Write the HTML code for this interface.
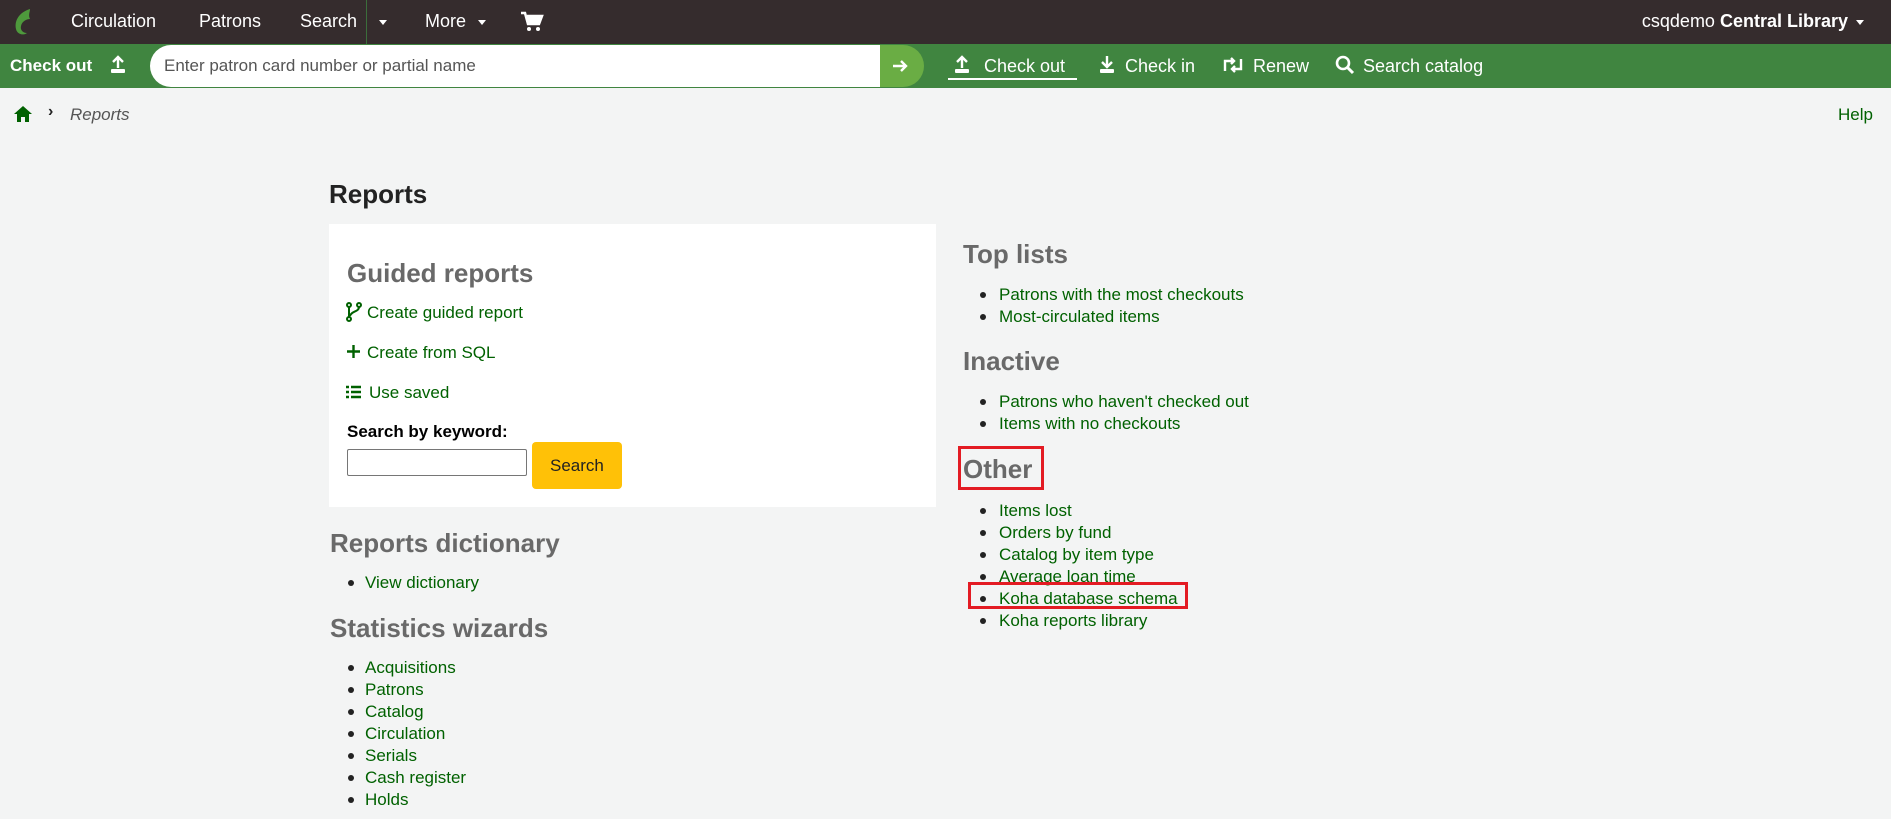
<!DOCTYPE html>
<html><head><meta charset="utf-8"><style>
*{margin:0;padding:0;box-sizing:border-box}
body{width:1891px;height:819px;background:#f3f4f4;font-family:"Liberation Sans",sans-serif;position:relative;overflow:hidden}
.a{position:absolute;white-space:nowrap;line-height:1}
.nav{position:absolute;left:0;top:0;width:1891px;height:44px;background:#352c2d}
.gb{position:absolute;left:0;top:44px;width:1891px;height:44px;background:#408540}
.w{color:#fff;font-size:18px}
.h{color:#696969;font-weight:bold;font-size:26px}
.l{color:#006100;font-size:17px}
.b{position:absolute;width:6px;height:6px;border-radius:50%;background:#222}
</style></head><body>
<div class="nav"></div>
<svg class="a" style="left:12px;top:8px" width="24" height="28" viewBox="0 0 24 28"><path d="M18 1C8 4 2 12 4 21c1 5 7 7 11 4-4 0-7-3-6-7 1-5 6-7 9-7-2-4 0-7 0-10z" fill="#4e9a3c"/></svg>
<div class="a w" style="left:71px;top:12px">Circulation</div>
<div class="a w" style="left:199px;top:12px">Patrons</div>
<div class="a w" style="left:300px;top:12px">Search</div>
<div class="a" style="left:366px;top:0;width:1px;height:44px;background:#3b6e3b"></div>
<div class="a" style="left:379px;top:20px;border:4px solid transparent;border-top:5px solid #fff;border-bottom:0"></div>
<div class="a w" style="left:425px;top:12px">More</div>
<div class="a" style="left:478px;top:20px;border:4px solid transparent;border-top:5px solid #fff;border-bottom:0"></div>
<svg class="a" style="left:520px;top:11px" width="24" height="22" viewBox="0 0 24 22"><path d="M1 2h4l3 11h11l3-8H7" fill="none" stroke="#fff" stroke-width="2.5"/><rect x="7" y="5" width="13" height="7" fill="#fff"/><circle cx="9" cy="18" r="2" fill="#fff"/><circle cx="18" cy="18" r="2" fill="#fff"/></svg>
<div class="a w" style="right:43px;top:12px">csqdemo <b>Central Library</b></div>
<div class="a" style="left:1856px;top:20px;border:4px solid transparent;border-top:5px solid #fff;border-bottom:0"></div>

<div class="gb"></div>
<div class="a w" style="left:10px;top:57px;font-weight:bold;font-size:17px">Check out</div>
<svg class="a" style="left:108px;top:55px" width="20" height="20" viewBox="0 0 20 20"><path d="M10 2v11M5 7l5-5 5 5" fill="none" stroke="#fff" stroke-width="2.4"/><rect x="3" y="14" width="14" height="4" rx="1" fill="#fff"/></svg>
<div class="a" style="left:150px;top:45px;width:740px;height:42px;background:#fff;border-radius:21px 0 0 21px"></div>
<div class="a" style="left:164px;top:57px;font-size:17px;color:#555">Enter patron card number or partial name</div>
<div class="a" style="left:880px;top:45px;width:44px;height:42px;background:#6aad44;border-radius:0 21px 21px 0"></div>
<svg class="a" style="left:891px;top:57px" width="18" height="18" viewBox="0 0 18 18"><path d="M2 9h13M10 4l5 5-5 5" fill="none" stroke="#fff" stroke-width="2.4"/></svg>
<svg class="a" style="left:951px;top:55px" width="22" height="20" viewBox="0 0 20 20"><path d="M10 2v11M5 7l5-5 5 5" fill="none" stroke="#fff" stroke-width="2.4"/><rect x="3" y="14" width="14" height="4" rx="1" fill="#fff"/></svg>
<div class="a w" style="left:984px;top:57px">Check out</div>
<div class="a" style="left:948px;top:78px;width:129px;height:2px;background:#fff"></div>
<svg class="a" style="left:1096px;top:55px" width="22" height="20" viewBox="0 0 20 20"><path d="M10 1v11M5 7l5 5 5-5" fill="none" stroke="#fff" stroke-width="2.4"/><rect x="3" y="14" width="14" height="4" rx="1" fill="#fff"/></svg>
<div class="a w" style="left:1125px;top:57px">Check in</div>
<svg class="a" style="left:1222px;top:57px" width="22" height="16" viewBox="0 0 22 16"><path d="M3 14V4h9M9 1l3 3-3 3M19 2v10h-9M13 15l-3-3 3-3" fill="none" stroke="#fff" stroke-width="2.4"/></svg>
<div class="a w" style="left:1253px;top:57px">Renew</div>
<svg class="a" style="left:1335px;top:55px" width="20" height="20" viewBox="0 0 20 20"><circle cx="8" cy="8" r="6" fill="none" stroke="#fff" stroke-width="2.6"/><path d="M12 12l6 6" stroke="#fff" stroke-width="3"/></svg>
<div class="a w" style="left:1363px;top:57px">Search catalog</div>

<svg class="a" style="left:13px;top:105px" width="20" height="18" viewBox="0 0 20 18"><path d="M10 1L1 9h3v8h4v-5h4v5h4V9h3z" fill="#006100"/></svg>
<div class="a" style="left:48px;top:104px;font-size:16px;font-weight:bold;color:#222">›</div>
<div class="a" style="left:70px;top:106px;font-size:17px;font-style:italic;color:#555">Reports</div>
<div class="a l" style="left:1838px;top:106px">Help</div>

<div class="a" style="left:329px;top:181px;font-size:26px;font-weight:bold;color:#222">Reports</div>
<div class="a" style="left:329px;top:224px;width:607px;height:283px;background:#fff"></div>
<div class="a h" style="left:347px;top:260px">Guided reports</div>
<svg class="a" style="left:346px;top:302px" width="16" height="20" viewBox="0 0 16 20"><circle cx="3" cy="3" r="2" fill="none" stroke="#006100" stroke-width="2"/><circle cx="3" cy="17" r="2" fill="none" stroke="#006100" stroke-width="2"/><circle cx="13" cy="3" r="2" fill="none" stroke="#006100" stroke-width="2"/><path d="M3 5v10M13 5c0 5-8 4-9 9" fill="none" stroke="#006100" stroke-width="2"/></svg>
<div class="a l" style="left:367px;top:304px">Create guided report</div>
<svg class="a" style="left:346px;top:344px" width="15" height="15" viewBox="0 0 15 15"><path d="M7.5 1v13M1 7.5h13" stroke="#006100" stroke-width="2.4"/></svg>
<div class="a l" style="left:367px;top:344px">Create from SQL</div>
<svg class="a" style="left:346px;top:385px" width="15" height="14" viewBox="0 0 15 14"><path d="M0 2h3M5 2h10M0 7h3M5 7h10M0 12h3M5 12h10" stroke="#006100" stroke-width="2.4"/></svg>
<div class="a l" style="left:369px;top:384px">Use saved</div>
<div class="a" style="left:347px;top:423px;font-size:17px;font-weight:bold;color:#000">Search by keyword:</div>
<div class="a" style="left:347px;top:449px;width:180px;height:27px;border:1px solid #767676;background:#fff;border-radius:2px"></div>
<div class="a" style="left:532px;top:442px;width:90px;height:47px;background:#ffc107;border-radius:4px"></div>
<div class="a" style="left:550px;top:457px;font-size:17px;color:#222">Search</div>

<div class="a h" style="left:330px;top:530px">Reports dictionary</div>
<div class="b" style="left:348px;top:580px"></div><div class="a l" style="left:365px;top:574px">View dictionary</div>
<div class="a h" style="left:330px;top:615px">Statistics wizards</div>
<div class="b" style="left:348px;top:665px"></div><div class="a l" style="left:365px;top:659px">Acquisitions</div>
<div class="b" style="left:348px;top:687px"></div><div class="a l" style="left:365px;top:681px">Patrons</div>
<div class="b" style="left:348px;top:709px"></div><div class="a l" style="left:365px;top:703px">Catalog</div>
<div class="b" style="left:348px;top:731px"></div><div class="a l" style="left:365px;top:725px">Circulation</div>
<div class="b" style="left:348px;top:753px"></div><div class="a l" style="left:365px;top:747px">Serials</div>
<div class="b" style="left:348px;top:775px"></div><div class="a l" style="left:365px;top:769px">Cash register</div>
<div class="b" style="left:348px;top:797px"></div><div class="a l" style="left:365px;top:791px">Holds</div>

<div class="a h" style="left:963px;top:241px">Top lists</div>
<div class="b" style="left:980px;top:292px"></div><div class="a l" style="left:999px;top:286px">Patrons with the most checkouts</div>
<div class="b" style="left:980px;top:314px"></div><div class="a l" style="left:999px;top:308px">Most-circulated items</div>
<div class="a h" style="left:963px;top:348px">Inactive</div>
<div class="b" style="left:980px;top:399px"></div><div class="a l" style="left:999px;top:393px">Patrons who haven't checked out</div>
<div class="b" style="left:980px;top:421px"></div><div class="a l" style="left:999px;top:415px">Items with no checkouts</div>
<div class="a h" style="left:963px;top:456px">Other</div>
<div class="a" style="left:958px;top:446px;width:86px;height:44px;border:3px solid #e31b23"></div>
<div class="b" style="left:980px;top:508px"></div><div class="a l" style="left:999px;top:502px">Items lost</div>
<div class="b" style="left:980px;top:530px"></div><div class="a l" style="left:999px;top:524px">Orders by fund</div>
<div class="b" style="left:980px;top:552px"></div><div class="a l" style="left:999px;top:546px">Catalog by item type</div>
<div class="b" style="left:980px;top:574px"></div><div class="a l" style="left:999px;top:568px">Average loan time</div>
<div class="b" style="left:980px;top:596px"></div><div class="a l" style="left:999px;top:590px">Koha database schema</div>
<div class="a" style="left:968px;top:582px;width:220px;height:27px;border:3px solid #e31b23"></div>
<div class="b" style="left:980px;top:618px"></div><div class="a l" style="left:999px;top:612px">Koha reports library</div>
</body></html>
